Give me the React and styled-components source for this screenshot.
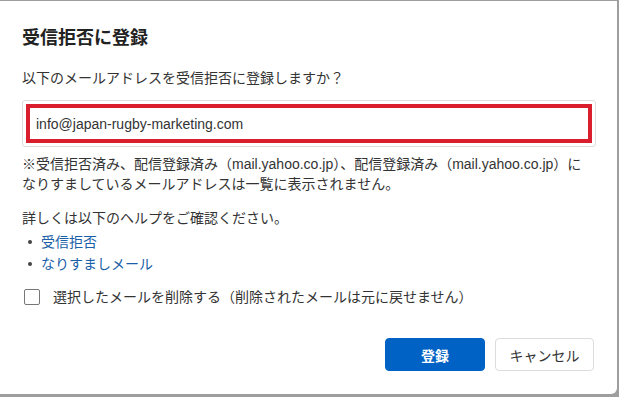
import React, { useState } from "react";
import styled, { createGlobalStyle } from "styled-components";

const GlobalStyle = createGlobalStyle`
  html, body {
    margin: 0;
    padding: 0;
    background: #9e9e9e;
  }
  body {
    font-family: "Liberation Sans", "Noto Sans CJK JP", sans-serif;
    color: #333;
  }
`;

const Dialog = styled.div`
  box-sizing: border-box;
  width: 617px;
  height: 393px;
  margin-top: 1px;
  background: #fff;
  border-radius: 0 0 6px 0;
  padding: 24px 22px 0 22px;
  display: flex;
  flex-direction: column;
`;

const Title = styled.h1`
  margin: 0;
  font-size: 18px;
  line-height: 26px;
  font-weight: 700;
  color: #222;
`;

const Question = styled.p`
  margin: 17px 0 0;
  font-size: 14px;
  line-height: 20px;
`;

const AddressFrame = styled.div`
  margin-top: 12px;
  width: 574px;
  box-sizing: border-box;
  border: 1px solid #dedede;
  border-radius: 3px;
  padding: 3px;
`;

const Address = styled.div`
  box-sizing: border-box;
  height: 39px;
  border: 4px solid #d91f2e;
  padding: 0 6px;
  display: flex;
  align-items: center;
  font-size: 14px;
  color: #333;
`;

const Note = styled.p`
  margin: 7px 0 0;
  font-size: 14px;
  line-height: 20px;
`;

const Help = styled.p`
  margin: 14px 0 0;
  font-size: 14px;
  line-height: 20px;
`;

const LinkList = styled.ul`
  margin: 3px 0 0;
  padding: 0;
  list-style: none;
`;

const LinkItem = styled.li`
  display: flex;
  align-items: center;
  font-size: 14px;
  line-height: 22px;

  &::before {
    content: "";
    width: 4px;
    height: 4px;
    border-radius: 50%;
    background: #444;
    margin: 0 9px 0 6px;
  }

  a {
    color: #1a5fa8;
    text-decoration: none;
  }
`;

const CheckRow = styled.label`
  margin-top: 12px;
  display: flex;
  align-items: center;
  gap: 13px;
  font-size: 14px;
  line-height: 20px;
  cursor: pointer;
`;

const Box = styled.span`
  width: 14px;
  height: 14px;
  margin-left: 2px;
  border: 1.5px solid #777;
  border-radius: 2px;
  background: #fff;
`;

const Footer = styled.div`
  margin-top: auto;
  margin-bottom: 23px;
  margin-right: 1px;
  display: flex;
  justify-content: flex-end;
  gap: 10px;
`;

const Button = styled.button`
  width: ${(p) => (p.$primary ? "100px" : "99px")};
  height: 33px;
  border-radius: 4px;
  font-family: inherit;
  font-size: 14px;
  font-weight: ${(p) => (p.$primary ? 700 : 400)};
  background: ${(p) => (p.$primary ? "#0062c4" : "#fff")};
  color: ${(p) => (p.$primary ? "#fff" : "#333")};
  border: 1px solid ${(p) => (p.$primary ? "#0062c4" : "#dcdcdc")};
  cursor: pointer;
`;

export default function App() {
  const [checked, setChecked] = useState(false);

  return (
    <>
      <GlobalStyle />
      <Dialog>
        <Title>受信拒否に登録</Title>
        <Question>以下のメールアドレスを受信拒否に登録しますか？</Question>
        <AddressFrame>
          <Address>info@japan-rugby-marketing.com</Address>
        </AddressFrame>
        <Note>
          ※受信拒否済み、配信登録済み（mail.yahoo.co.jp）、配信登録済み（mail.yahoo.co.jp）に
          <br />
          なりすましているメールアドレスは一覧に表示されません。
        </Note>
        <Help>詳しくは以下のヘルプをご確認ください。</Help>
        <LinkList>
          <LinkItem><a href="#">受信拒否</a></LinkItem>
          <LinkItem><a href="#">なりすましメール</a></LinkItem>
        </LinkList>
        <CheckRow onClick={() => setChecked(!checked)}>
          <Box />
          選択したメールを削除する（削除されたメールは元に戻せません）
        </CheckRow>
        <Footer>
          <Button $primary>登録</Button>
          <Button>キャンセル</Button>
        </Footer>
      </Dialog>
    </>
  );
}
